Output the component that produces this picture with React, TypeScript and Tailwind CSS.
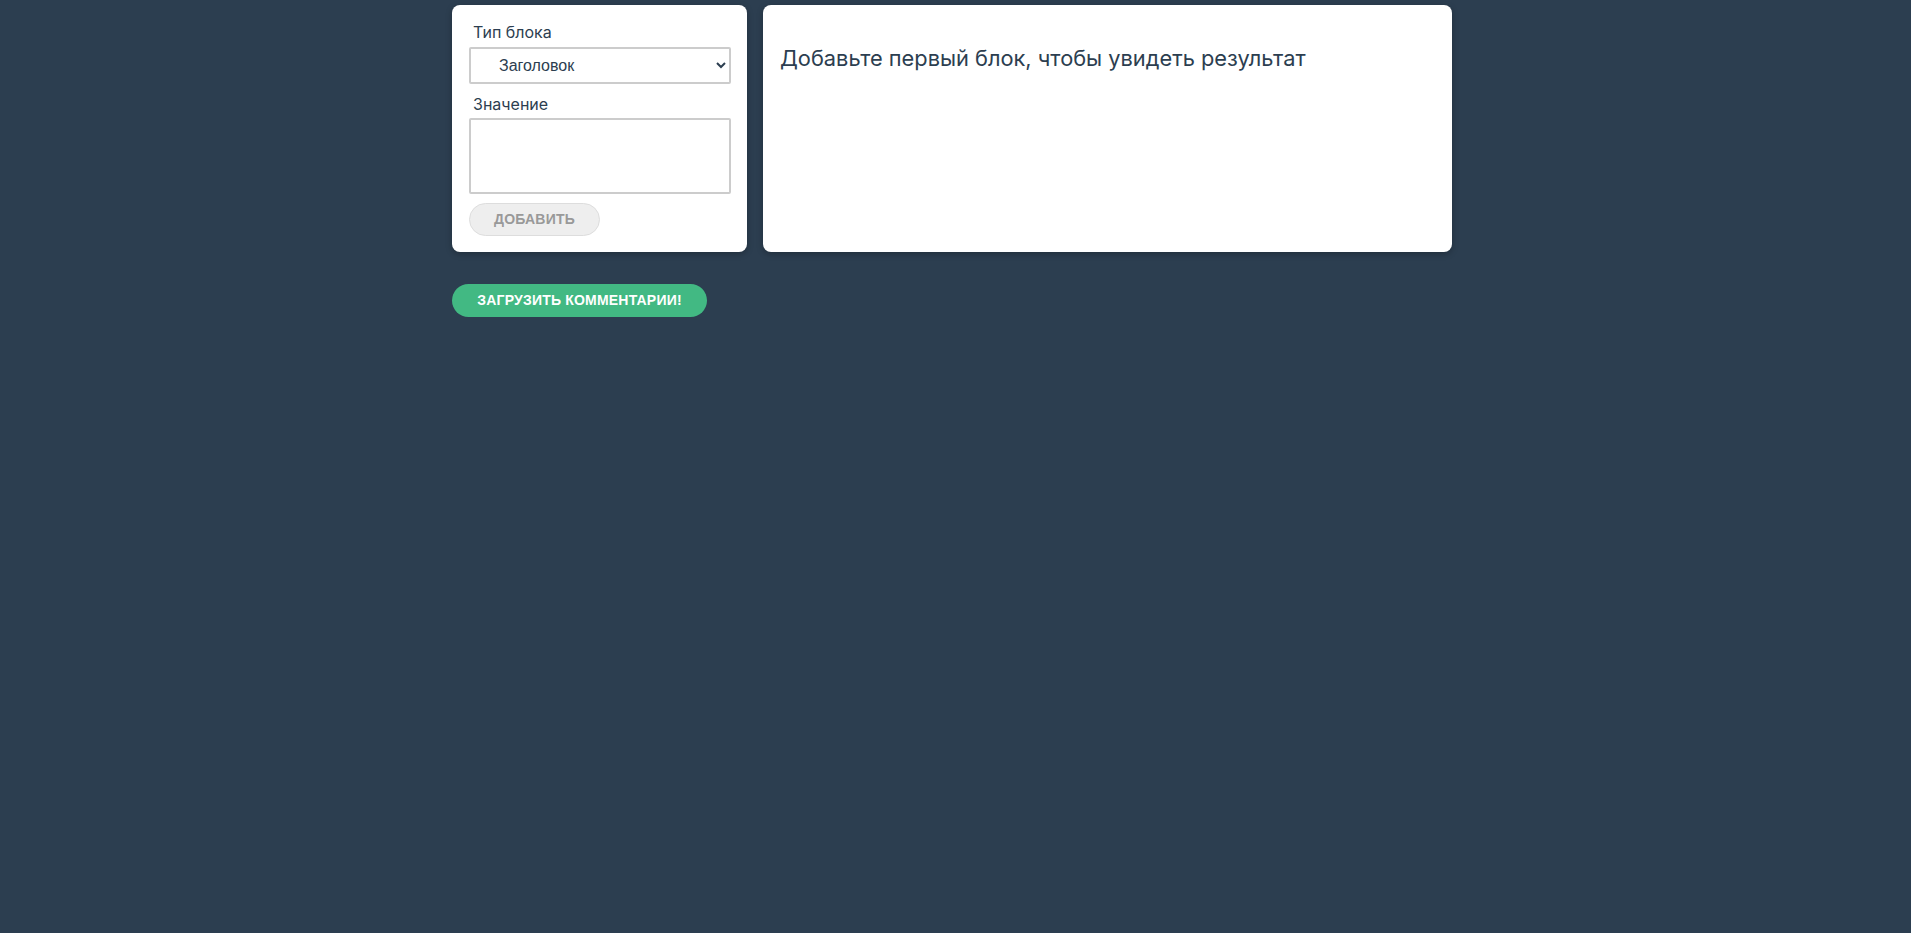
import React from "react";

export default function App() {
  return (
    <div className="min-h-[933px] w-full bg-[#2c3e50] text-[#2c3e50]" style={{ fontFamily: "Inter, 'Noto Sans', sans-serif" }}>
      <div className="ml-[452px] w-[1000px] pt-[5px]">
        <div className="flex gap-[16px]">
          <div className="flex w-[295px] flex-col rounded-[8px] bg-white pb-[16px] pl-[17px] pr-[16px] pt-[15px] shadow-[0_2px_6px_rgba(0,0,0,0.25)]">
            <label className="ml-[4px] text-[16px] leading-[24px]">Тип блока</label>
            <select
              className="mt-[3px] h-[37px] w-[262px] rounded-[2px] border-2 border-[#cccccc] bg-white pl-[24px] text-[16px] text-[#2c3e50] outline-none"
              style={{ fontFamily: "'Liberation Sans', Arial, sans-serif" }}
              defaultValue="title"
            >
              <option value="title">Заголовок</option>
              <option value="subtitle">Подзаголовок</option>
              <option value="avatar">Аватар</option>
              <option value="text">Текст</option>
            </select>
            <label className="ml-[4px] mt-[8px] text-[16px] leading-[24px]">Значение</label>
            <textarea className="mt-[2px] h-[76px] w-[262px] resize-none rounded-[2px] border-2 border-[#cccccc] outline-none" />
            <div className="mt-[9px]">
              <button
                disabled
                className="h-[33px] w-[131px] rounded-full border border-[#dddddd] bg-[#eeeeee] text-[14px] font-bold uppercase tracking-[0.2px] text-[#999999]"
                style={{ fontFamily: "'Liberation Sans', Arial, sans-serif" }}
              >
                Добавить
              </button>
            </div>
          </div>
          <div className="flex-1 rounded-[8px] bg-white pl-[17px] pt-[39px] shadow-[0_2px_6px_rgba(0,0,0,0.25)]">
            <h3 className="text-[21.8px] leading-[28px]">Добавьте первый блок, чтобы увидеть результат</h3>
          </div>
        </div>
        <div className="mt-[32px]">
          <button
            className="h-[33px] w-[255px] rounded-full bg-[#42b983] text-[14px] font-bold uppercase tracking-[0.2px] text-white"
            style={{ fontFamily: "'Liberation Sans', Arial, sans-serif" }}
          >
            Загрузить комментарии!
          </button>
        </div>
      </div>
    </div>
  );
}
